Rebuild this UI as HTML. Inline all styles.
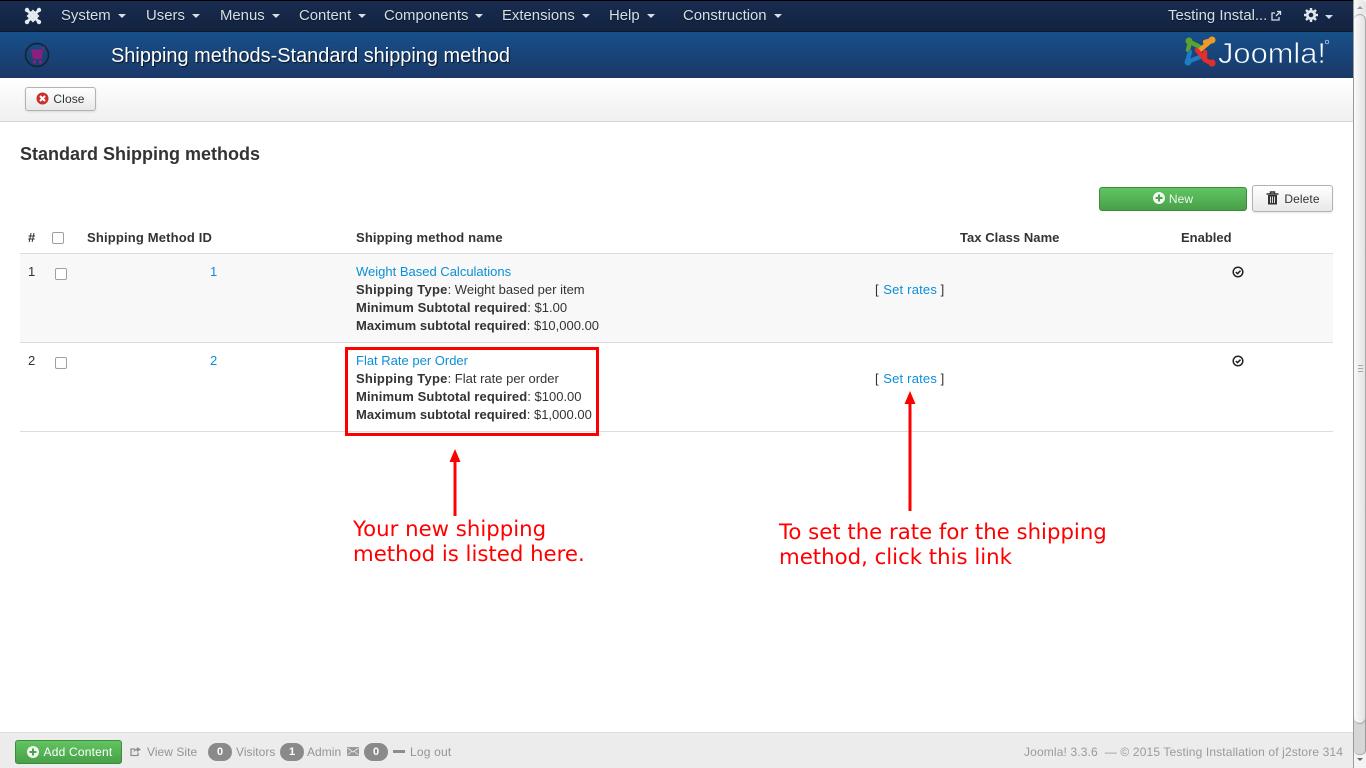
<!DOCTYPE html>
<html><head><meta charset="utf-8"><title>Shipping methods</title>
<style>
html,body{margin:0;padding:0;width:1366px;height:768px;overflow:hidden;background:#fff;font-family:"Liberation Sans",sans-serif;font-size:13px;color:#333}
.a{position:absolute;white-space:nowrap}
#nav{left:0;top:0;width:1353px;height:32px;background:linear-gradient(#182c50,#13233f);border-top:1px solid #000;box-sizing:border-box;border-bottom:1px solid #0c1a30}
.m{position:absolute;top:7px;line-height:16px;font-size:14.9px;color:#d6dee8;white-space:nowrap;text-shadow:0 1px 1px rgba(0,0,0,.5)}
.m i{display:inline-block;width:0;height:0;border:4px solid transparent;border-top-color:#d6dee8;border-bottom:0;margin-left:7px;vertical-align:2px}
#hd{left:0;top:32px;width:1353px;height:46px;background:linear-gradient(#17508a,#1a3867)}
#tb{left:0;top:78px;width:1353px;height:44px;background:linear-gradient(#fff,#f0f0f0);border-bottom:1px solid #d8d8d8;box-sizing:border-box}
.btn{position:absolute;box-sizing:border-box;border:1px solid #b3b3b3;border-radius:3px;background:linear-gradient(#fff,#e8e8e8);box-shadow:0 1px 2px rgba(0,0,0,.1);font-size:12px;color:#333;text-align:center;letter-spacing:.1px}
.green{border:1px solid #3d8b3d;background:linear-gradient(#62c462,#48a048);color:#fff;border-radius:3px;position:absolute;box-sizing:border-box;font-size:12px;text-align:center;letter-spacing:.1px}
.l{position:absolute;line-height:18px;font-size:13px;white-space:nowrap;color:#333}
.b{font-weight:bold;color:#333;letter-spacing:.12px}
.lk{color:#0a8fd6}
.cb{position:absolute;width:10px;height:10px;border:1px solid #a0a0a0;border-radius:2px;background:#fff}
.rule{position:absolute;left:20px;width:1313px;height:1px;background:#ddd}
.note{position:absolute;color:#f00;font-family:"DejaVu Sans",sans-serif;font-size:21.25px;line-height:25px;white-space:nowrap}
#ft{left:0;top:732px;width:1353px;height:36px;background:#ececec;border-top:1px solid #ddd;box-sizing:border-box;color:#8e8e8e;font-size:12px}
.f{position:absolute;top:12px;line-height:14px;white-space:nowrap;color:#949494;font-size:12px;letter-spacing:.04px}
.bd{position:absolute;top:10px;width:24px;height:18px;border-radius:9px;background:#8a8a8a;color:#fff;font-size:11px;font-weight:bold;text-align:center;line-height:18px}
</style></head><body>

<div class="a" id="nav">
<svg class="a" style="left:24px;top:6px" width="18" height="18" viewBox="0 0 18 18"><g fill="none" stroke="#e6ebf1" stroke-width="2.800" stroke-linecap="round"><path d="M3 3 L15 15M15 3 L3 15M4.500 9 L9 4.500 L13.500 9 L9 13.500 Z"/></g><g fill="#e6ebf1"><circle cx="3" cy="3" r="2.200"/><circle cx="15" cy="3" r="2.200"/><circle cx="3" cy="15" r="2.200"/><circle cx="15" cy="15" r="2.200"/></g></svg>
<span class="m" style="left:61px">System<i></i></span>
<span class="m" style="left:146px">Users<i></i></span>
<span class="m" style="left:220px">Menus<i></i></span>
<span class="m" style="left:299px">Content<i></i></span>
<span class="m" style="left:384px">Components<i></i></span>
<span class="m" style="left:502px">Extensions<i></i></span>
<span class="m" style="left:609px">Help<i></i></span>
<span class="m" style="left:683px">Construction<i></i></span>
<span class="m" style="left:1168px">Testing Instal...</span>
<svg class="a" style="left:1270px;top:9px" width="12" height="12" viewBox="0 0 12 12"><path d="M9 7v3H2V3h3M6 6l4-4M7 1.500h3.500V5" fill="none" stroke="#d6dee8" stroke-width="1.300"/></svg>
<svg class="a" style="left:1304px;top:7px" width="14" height="14" viewBox="0 0 14 14"><circle cx="7" cy="7" r="3.700" fill="none" stroke="#e0e5ec" stroke-width="2.800"/><path d="M7 0v3M7 11v3M0 7h3M11 7h3M2 2l2 2M10 10l2 2M12 2l-2 2M4 10l-2 2" stroke="#e0e5ec" stroke-width="2.400"/></svg>
<span class="a" style="left:1325px;top:14px;width:0;height:0;border:4px solid transparent;border-top-color:#d6dee8;border-bottom:0"></span>
</div>

<div class="a" id="hd">
<svg class="a" style="left:24px;top:10px" width="26" height="26" viewBox="0 0 26 26"><circle cx="13" cy="13" r="11.500" fill="none" stroke="#17202f" stroke-width="1.500"/><path d="M7 7.500h12l-1 9.500H9z" fill="#8c1f7c"/><rect x="9" y="18.500" width="3" height="3" fill="#8c1f7c"/><rect x="15" y="18.500" width="3" height="3" fill="#8c1f7c"/><path d="M18.500 8l.8-2.500h1.700" stroke="#8c1f7c" stroke-width="1.500" fill="none"/></svg>
<div class="a" style="left:111px;top:12px;font-size:19.950px;line-height:24px;color:#fff;text-shadow:1px 1px 1px rgba(0,0,0,.7)">Shipping methods-Standard shipping method</div>
<svg class="a" style="left:1184px;top:3px" width="32" height="33" viewBox="0 0 32 33"><g fill="none" stroke-width="4.400" stroke-linecap="round" stroke-linejoin="round"><path d="M4 15L6 7L16 12" stroke="#5ba32e"/><path d="M21 7L28 5L16 15" stroke="#f09a2a"/><path d="M6 17L3 27L16 22" stroke="#1e7cc4"/><path d="M13 15L21 25L29 29M21 17V25" stroke="#e32e2e"/></g><circle cx="5" cy="6" r="3.500" fill="#5ba32e"/><circle cx="28" cy="5" r="3.500" fill="#f09a2a"/><circle cx="4" cy="27" r="3.500" fill="#1e7cc4"/><circle cx="28" cy="28" r="3.500" fill="#e32e2e"/></svg>
<svg class="a" style="left:1216px;top:3px" width="116" height="34" viewBox="0 0 116 34"><text x="2" y="28" font-family="'Liberation Sans',sans-serif" font-size="29" fill="#fff" stroke="#184a80" stroke-width=".7" textLength="108" lengthAdjust="spacingAndGlyphs">Joomla!</text><circle cx="111" cy="7" r="1.800" fill="none" stroke="#dfe6ee" stroke-width=".7"/></svg>
</div>

<div class="a" id="tb">
<div class="btn" style="left:25px;top:9px;width:71px;height:24px;line-height:22px;padding-left:17px">Close</div>
<svg class="a" style="left:36px;top:14px" width="13" height="13" viewBox="0 0 13 13"><circle cx="6.500" cy="6.500" r="6" fill="#c9302c"/><path d="M4 4l5 5M9 4l-5 5" stroke="#fff" stroke-width="2"/></svg>
</div>

<div class="a" style="left:20px;top:144px;font-size:18px;line-height:20px;font-weight:bold;color:#333">Standard Shipping methods</div>

<div class="green" style="left:1099px;top:187px;width:148px;height:24px;line-height:22px;padding-left:16px;color:#eef8ee">New</div>
<svg class="a" style="left:1153px;top:192px" width="12" height="12" viewBox="0 0 12 12"><circle cx="6" cy="6" r="6" fill="#f2f7f2"/><path d="M6 2.500v7M2.500 6h7" stroke="#4aa54a" stroke-width="2"/></svg>
<div class="btn" style="left:1252px;top:185px;width:81px;height:27px;line-height:27px;padding-left:19px;color:#333">Delete</div>
<svg class="a" style="left:1266px;top:191px" width="13" height="14" viewBox="0 0 13 14"><path d="M0.500 3h12M4.500 2.500V1h4v1.500" stroke="#333" stroke-width="1.400" fill="none"/><path d="M2 4h9v9.500H2z" fill="#333"/><path d="M4.500 5.500v6.500M6.500 5.500v6.500M8.500 5.500v6.500" stroke="#eee" stroke-width=".9"/></svg>

<div class="l b" style="left:28px;top:229px">#</div>
<div class="cb" style="left:52px;top:232px"></div>
<div class="l b" style="left:87px;top:229px;letter-spacing:.17px">Shipping Method ID</div>
<div class="l b" style="left:356px;top:229px;letter-spacing:.15px">Shipping method name</div>
<div class="l b" style="left:960px;top:229px;letter-spacing:.05px">Tax Class Name</div>
<div class="l b" style="left:1181px;top:229px;letter-spacing:0">Enabled</div>

<div class="rule" style="top:253px"></div>
<div class="a" style="left:20px;top:254px;width:1313px;height:88px;background:#f8f8f8"></div>
<div class="rule" style="top:342px"></div>
<div class="rule" style="top:431px"></div>

<div class="l" style="left:28px;top:263px">1</div>
<div class="cb" style="left:55px;top:268px"></div>
<div class="l lk" style="left:210px;top:263px">1</div>
<div class="l lk" style="left:356px;top:263px">Weight Based Calculations</div>
<div class="l" style="left:356px;top:281px"><span class="b" style="letter-spacing:.23px">Shipping Type</span>: Weight based per item</div>
<div class="l" style="left:356px;top:299px"><span class="b">Minimum Subtotal required</span>: $1.00</div>
<div class="l" style="left:356px;top:317px"><span class="b" style="letter-spacing:.04px">Maximum subtotal required</span>: $10,000.00</div>
<div class="l" style="left:875px;top:281px">[ <span class="lk" style="letter-spacing:.2px;margin-left:1px">Set rates</span> ]</div>

<div class="l" style="left:28px;top:352px">2</div>
<div class="cb" style="left:55px;top:357px"></div>
<div class="l lk" style="left:210px;top:352px">2</div>
<div class="l lk" style="left:356px;top:352px">Flat Rate per Order</div>
<div class="l" style="left:356px;top:370px"><span class="b" style="letter-spacing:.23px">Shipping Type</span>: Flat rate per order</div>
<div class="l" style="left:356px;top:388px"><span class="b">Minimum Subtotal required</span>: $100.00</div>
<div class="l" style="left:356px;top:406px"><span class="b" style="letter-spacing:.04px">Maximum subtotal required</span>: $1,000.00</div>
<div class="l" style="left:875px;top:370px">[ <span class="lk" style="letter-spacing:.2px;margin-left:1px">Set rates</span> ]</div>

<svg class="a" style="left:1232px;top:266px" width="12" height="12" viewBox="0 0 12 12"><circle cx="6" cy="6" r="4.800" fill="none" stroke="#222" stroke-width="1.500"/><path d="M3.800 6l1.700 1.700 3-3" fill="none" stroke="#222" stroke-width="1.500"/></svg>
<svg class="a" style="left:1232px;top:355px" width="12" height="12" viewBox="0 0 12 12"><circle cx="6" cy="6" r="4.800" fill="none" stroke="#222" stroke-width="1.500"/><path d="M3.800 6l1.700 1.700 3-3" fill="none" stroke="#222" stroke-width="1.500"/></svg>

<div class="a" style="left:345px;top:347px;width:254px;height:89px;box-sizing:border-box;border:3px solid #f00"></div>
<svg class="a" style="left:440px;top:380px" width="490" height="140" viewBox="0 0 490 140"><path d="M15 136V78" stroke="#f00" stroke-width="3"/><path d="M15 69l5.500 13h-11z" fill="#f00"/><path d="M470 131V20" stroke="#f00" stroke-width="3"/><path d="M470 11l5.500 13h-11z" fill="#f00"/></svg>
<div class="note" style="left:353px;top:517px">Your new shipping<br>method is listed here.</div>
<div class="note" style="left:779px;top:520px">To set the rate for the shipping<br>method, click this link</div>

<div class="a" id="ft">
<div class="green" style="left:15px;top:7px;width:107px;height:24px;line-height:23px;padding-left:19px;color:#fff;letter-spacing:.2px">Add Content</div>
<svg class="a" style="left:27px;top:13px" width="12" height="12" viewBox="0 0 12 12"><circle cx="6" cy="6" r="6" fill="#f4f8f4"/><path d="M6 2.500v7M2.500 6h7" stroke="#4aa54a" stroke-width="2"/></svg>
<svg class="a" style="left:130px;top:13px" width="12" height="11" viewBox="0 0 12 11"><path d="M8 6.500V9.500H1V3h4" fill="none" stroke="#8e8e8e" stroke-width="1.300"/><path d="M7 1l4 2.500L7 6V4.500C5 4.500 4 5.500 3.500 7 3.500 4.500 5 2.800 7 2.500z" fill="#8e8e8e"/></svg>
<span class="f" style="left:147px">View Site</span>
<span class="bd" style="left:208px">0</span><span class="f" style="left:236px">Visitors</span>
<span class="bd" style="left:280px">1</span><span class="f" style="left:307px">Admin</span>
<svg class="a" style="left:347px;top:14px" width="12" height="9" viewBox="0 0 12 9"><rect width="12" height="9" fill="#9a9a9a"/><path d="M0.500 1l5.500 4 5.500-4M.5 8l4-3.500M11.500 8l-4-3.500" stroke="#ececec" fill="none" stroke-width=".8"/></svg>
<span class="bd" style="left:364px">0</span>
<span class="a" style="left:393px;top:17px;width:12px;height:3px;background:#8e8e8e"></span>
<span class="f" style="left:410px;letter-spacing:.2px">Log out</span>
<span class="f" style="left:1024px;letter-spacing:.14px;color:#9a9a9a">Joomla! 3.3.6 &nbsp;— © 2015 Testing Installation of j2store 314</span>
</div>

<div class="a" style="left:1353px;top:0;width:13px;height:768px;background:#f4f4f4;border-left:1px solid #9a9a9a;box-sizing:border-box">
<div class="a" style="left:0;top:0;width:12px;height:14px;background:linear-gradient(90deg,#f7f7f7,#e4e4e4);border-radius:5px 5px 0 0"></div>
<div class="a" style="left:3px;top:6px;width:0;height:0;border:3px solid transparent;border-bottom-color:#999;border-top:0"></div>
<div class="a" style="left:0;top:710px;width:11px;height:44px;background:#d6d6d6;border-right:1px solid #9a9a9a;border-bottom:1px solid #aaa;border-radius:0 0 5px 5px"></div>
<div class="a" style="left:0;top:14px;width:12px;height:710px;background:linear-gradient(90deg,#fafafa,#e2e2e2);border:1px solid #a8a8a8;border-left:0;box-sizing:border-box;border-radius:6px"></div>
<div class="a" style="left:4px;top:365px;width:5px;height:1px;background:#a8a8a8;box-shadow:0 3px 0 #a8a8a8,0 6px 0 #a8a8a8"></div>
<div class="a" style="left:3px;top:758px;width:0;height:0;border:3px solid transparent;border-top-color:#666;border-bottom:0"></div>
</div>
</body></html>
